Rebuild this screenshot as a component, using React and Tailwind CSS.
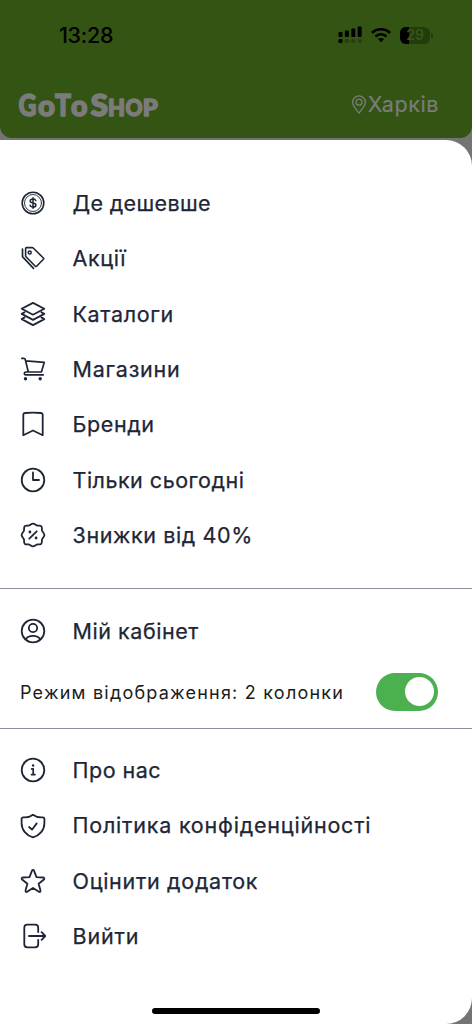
import React, { useState } from "react";

function Icon({ children }) {
  return (
    <svg
      className="w-[26px] h-[26px] shrink-0"
      viewBox="0 0 26 26"
      fill="none"
      stroke="currentColor"
      strokeWidth="1.8"
      strokeLinecap="round"
      strokeLinejoin="round"
    >
      {children}
    </svg>
  );
}

const icons = {
  coin: (
    <Icon>
      <circle cx="13" cy="13" r="10.8" strokeWidth="1.6" />
      <circle cx="13" cy="13" r="8.5" strokeWidth="0.9" />
      <path d="M15.8 10.6c-.3-1-1.4-1.6-2.8-1.6-1.600 0-2.800.8-2.800 2 0 2.700 5.700 1.200 5.700 3.900 0 1.300-1.200 2.100-2.900 2.100-1.600 0-2.700-.7-2.900-1.800M13 7.800v10.500" strokeWidth="1.500" />
    </Icon>
  ),
  tags: (
    <Icon>
      <path d="M5.600 3.500C5.600 3 6 2.600 6.500 2.600h5.700c.4 0 .7.100 1 .4l10.200 10c.4.400.4.900 0 1.300l-6.800 6.900c-.4.400-.9.400-1.300 0L6 11.700c-.3-.3-.4-.6-.4-1z" strokeWidth="1.600" />
      <circle cx="9.700" cy="7.600" r="1.500" strokeWidth="1.500" />
      <path d="M2.500 4v7.200c0 .4.100.7.400 1L13.500 23.300" strokeWidth="1.700" />
    </Icon>
  ),
  layers: (
    <Icon>
      <path d="M13 1.900l11.300 5.900L13 13.700 1.700 7.800z" />
      <path d="M4.600 11.200l-2.900 1.700L13 18.900l11.300-6-2.900-1.700" />
      <path d="M4.600 16.400l-2.900 1.700L13 24.100l11.300-6-2.900-1.700" />
    </Icon>
  ),
  cart: (
    <Icon>
      <path d="M1.800 2.300h2c.7 0 1.200.4 1.400 1L8.300 16h13.100L24.300 6.300 6 4.800M8.300 16H6c-1 0-1.700.6-1.700 1.500s.7 1.400 1.700 1.400h17.200" strokeWidth="1.700" />
      <circle cx="5.500" cy="22.700" r="1.700" fill="currentColor" stroke="none" />
      <circle cx="20.200" cy="22.700" r="1.700" fill="currentColor" stroke="none" />
    </Icon>
  ),
  bookmark: (
    <Icon>
      <path d="M3.300 24.200V3.600c0-1 .8-1.500 1.800-1.600 5.300-.4 10.500-.4 15.800 0 1 .1 1.800.6 1.800 1.600v20.600L13 19.500z" />
    </Icon>
  ),
  clock: (
    <Icon>
      <circle cx="13" cy="13" r="11.300" />
      <path d="M13 5.500V13h6" />
    </Icon>
  ),
  discount: (
    <Icon>
      <path d="M13 1.600c1.700 0 2.500 1.500 4 1.900 1.500.3 3-.5 4.200.7s.5 2.800.8 4.200c.4 1.800 2.400 2.800 2.400 4.600s-2 2.800-2.400 4.600c-.3 1.400.4 3-.8 4.200s-2.700.4-4.200.7c-1.500.4-2.300 1.900-4 1.900s-2.500-1.500-4-1.900c-1.500-.3-3 .5-4.200-.7s-.5-2.800-.8-4.200C3.600 15.800 1.600 14.800 1.600 13s2-2.800 2.400-4.600c.3-1.400-.4-3 .8-4.200s2.700-.4 4.200-.7c1.500-.4 2.300-1.900 4-1.900z" />
      <path d="M16.700 9.300l-7.400 7.400" />
      <circle cx="9.900" cy="10" r="1.400" fill="currentColor" stroke="none" />
      <circle cx="16.100" cy="16" r="1.400" fill="currentColor" stroke="none" />
    </Icon>
  ),
  user: (
    <Icon>
      <circle cx="13" cy="13" r="11.300" />
      <circle cx="13" cy="10" r="4.200" />
      <path d="M5.600 21.300c1.300-2.100 4-3.400 7.400-3.400s6.100 1.300 7.400 3.400" />
    </Icon>
  ),
  info: (
    <Icon>
      <circle cx="13" cy="13" r="11.300" />
      <path d="M11.700 11.900h1.500v5.300M11.500 17.600h3.500" strokeWidth="1.700" />
      <circle cx="13.100" cy="8.500" r="1.200" fill="currentColor" stroke="none" />
    </Icon>
  ),
  shield: (
    <Icon>
      <path d="M13 1.700c2.800 2.100 6.300 3 9.800 2.700 1 0 1.600.7 1.600 1.700v4.100c0 6.800-4.800 12.200-11.400 14.200C6.400 22.400 1.600 17 1.600 10.200V6.100c0-1 .6-1.700 1.600-1.700 3.500.3 7-.6 9.800-2.700z" />
      <path d="M9.100 14l2.900 2.700 4.700-6.300" />
    </Icon>
  ),
  star: (
    <Icon>
      <path d="M13 1.900c.5 0 .8.300 1 .8l2.500 6.400 6.700.4c1.200.1 1.500 1.300.7 2l-5.300 4.200 1.900 6.900c.3 1-.7 1.700-1.600 1.200L13 20l-5.900 3.800c-.9.500-1.900-.2-1.600-1.200l1.900-6.900-5.300-4.200c-.8-.7-.5-1.900.7-2l6.700-.4L12 2.700c.2-.5.500-.8 1-.8z" />
    </Icon>
  ),
  logout: (
    <Icon>
      <path d="M18.200 9V4.700c0-1.700-1.300-3-3-3H7.300c-1.700 0-3 1.300-3 3v16.600c0 1.700 1.300 3 3 3h7.900c1.700 0 3-1.300 3-3V17" />
      <path d="M9 13h16.300M21.600 9.200l3.700 3.800-3.700 3.800" />
    </Icon>
  ),
};

const mainItems = [
  { icon: "coin", label: "Де дешевше", spacing: "tracking-[0.35px]" },
  { icon: "tags", label: "Акції", spacing: "tracking-[0.6px]" },
  { icon: "layers", label: "Каталоги", spacing: "tracking-[0.65px]" },
  { icon: "cart", label: "Магазини", spacing: "tracking-[0.8px]" },
  { icon: "bookmark", label: "Бренди", spacing: "tracking-[0.6px]" },
  { icon: "clock", label: "Тільки сьогодні", spacing: "tracking-[0.5px]" },
  { icon: "discount", label: "Знижки від 40%", spacing: "tracking-[0.6px]" },
];

const infoItems = [
  { icon: "info", label: "Про нас", spacing: "tracking-[0.5px]" },
  { icon: "shield", label: "Політика конфіденційності", spacing: "tracking-[0.79px]" },
  { icon: "star", label: "Оцінити додаток", spacing: "tracking-[0.7px]" },
  { icon: "logout", label: "Вийти", spacing: "tracking-[0.85px]" },
];

function MenuItem({ icon, label, spacing }) {
  return (
    <button className="flex items-center w-full h-[55.3px] pl-5 text-left text-[#1d2636]">
      {icons[icon]}
      <span
        className={`ml-[26.5px] text-[21.5px] whitespace-nowrap [-webkit-text-stroke:0.25px] ${spacing}`}
      >
        {label}
      </span>
    </button>
  );
}

function Logo() {
  // small-caps wordmark: [letter, x, width, font size]
  const letters = [
    ["G", 0.5, 18, 30],
    ["o", 20, 17, 29],
    ["T", 37, 16, 30],
    ["o", 53, 16.500, 29],
    ["S", 72.500, 17.500, 30],
    ["H", 90, 17, 22],
    ["O", 107.500, 17, 22],
    ["P", 124.700, 15, 22],
  ];
  return (
    <svg
      className="w-[144px] h-[44px] overflow-visible font-['Lato'] font-black"
      viewBox="0 0 144 44"
      fill="#7b7b7b"
      stroke="#7b7b7b"
      strokeWidth="1.5"
      strokeLinejoin="round"
    >
      {letters.map(([char, x, width, size], i) => (
        <text key={i} x={x} y="32.500" fontSize={size} textLength={width} lengthAdjust="spacingAndGlyphs">
          {char}
        </text>
      ))}
    </svg>
  );
}

function StatusBar() {
  return (
    <div className="flex items-center justify-between h-[70px] pl-[59px] pr-[39px]">
      <span className="text-[21.5px] tracking-[-0.3px] font-medium text-black">13:28</span>
      <div className="flex items-center">
        <svg className="w-6 h-[18px]" viewBox="0 0 24 18">
          <rect x="0.500" y="6" width="4" height="5" rx="1" />
          <rect x="6.900" y="4.500" width="4" height="6.500" rx="1" />
          <rect x="13.300" y="2.500" width="4" height="8.500" rx="1" />
          <rect x="19.700" y="0.500" width="4" height="10.500" rx="1" />
          <rect x="0.500" y="13" width="4" height="4" rx="1.200" />
          <g fill="#26400f">
            <rect x="6.900" y="13" width="4" height="4" rx="1.200" />
            <rect x="13.300" y="13" width="4" height="4" rx="1.200" />
            <rect x="19.700" y="13" width="4" height="4" rx="1.200" />
          </g>
        </svg>
        <svg className="w-5 h-4 ml-[9px]" viewBox="0 0 20 16" fill="none" stroke="black" strokeWidth="2.700">
          <path d="M1 6c5-5 13-5 18 0" />
          <path d="M4.500 9.500c3-3 8-3 11 0" />
          <path d="M7 12c1.800-1.500 4.200-1.500 6 0l-3 3.300z" fill="black" stroke="none" />
        </svg>
        <div className="relative flex items-center justify-center w-[30px] h-[17px] ml-[9px] rounded-[6px] overflow-hidden bg-[#233b0d]">
          <div className="absolute inset-y-0 left-0 w-[9px] bg-black" />
          <span className="relative text-[14px] leading-none font-semibold text-[#365816]">29</span>
        </div>
        <div className="w-[2px] h-[5px] ml-px rounded-r bg-[#233b0d]" />
      </div>
    </div>
  );
}

function Header() {
  return (
    <header className="h-[138px] rounded-b-[12px] bg-[#335412]">
      <StatusBar />
      <div className="flex items-center justify-between h-[69px] pl-[18px] pr-[33px]">
        <Logo />
        <div className="flex items-center text-[#7b7b7b]">
          <svg className="w-4 h-[19px]" viewBox="0 0 16 19" fill="none" stroke="currentColor" strokeWidth="1.300">
            <path d="M8 18C5 14 1.600 10.700 1.600 7.200a6.400 6.400 0 0 1 12.800 0C14.400 10.700 11 14 8 18z" />
            <circle cx="8" cy="7.200" r="3" />
          </svg>
          <span className="ml-px text-[21.5px] tracking-[0.6px] [-webkit-text-stroke:0.2px]">Харків</span>
        </div>
      </div>
    </header>
  );
}

function App() {
  const [twoColumns, setTwoColumns] = useState(true);

  return (
    <div className="flex flex-col w-[472px] h-[1024px] overflow-hidden bg-[#747474] font-['Inter',sans-serif]">
      <Header />

      <main className="flex flex-col flex-1 mt-[1.5px] pt-9 rounded-r-[26px] bg-white">
        <nav>
          {mainItems.map((item) => (
            <MenuItem key={item.label} {...item} />
          ))}
        </nav>

        <section className="mt-[25px] h-[141px] pt-[15px] border-y-[1.5px] border-[#8c909c]">
          <MenuItem icon="user" label="Мій кабінет" spacing="tracking-[0.55px]" />
          <div className="flex items-center justify-between h-[68px] pl-5 pr-[34px]">
            <span className="text-[18px] tracking-[1.22px] text-[#1c1c1c] whitespace-nowrap">
              Режим відображення: {twoColumns ? 2 : 1} колонки
            </span>
            <button
              onClick={() => setTwoColumns(!twoColumns)}
              className={`flex items-center w-[62px] h-[38px] mb-[2px] px-1 rounded-full ${
                twoColumns ? "justify-end bg-[#4caf50]" : "justify-start bg-gray-300"
              }`}
            >
              <span className="w-[29px] h-[29px] rounded-full bg-white" />
            </button>
          </div>
        </section>

        <nav className="mt-[14px]">
          {infoItems.map((item) => (
            <MenuItem key={item.label} {...item} />
          ))}
        </nav>

        {/* Home indicator */}
        <div className="w-[168px] h-[6px] mt-auto mb-[10px] mx-auto rounded-full bg-black" />
      </main>
    </div>
  );
}

export default App;
